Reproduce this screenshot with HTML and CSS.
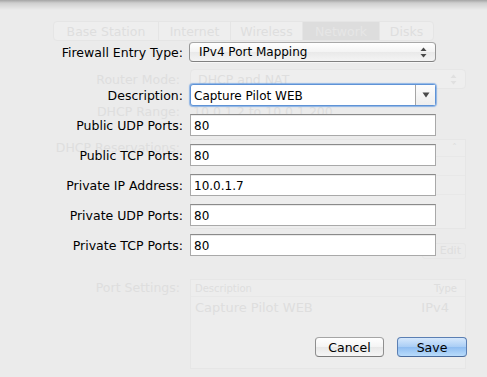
FILE: index.html
```
<!DOCTYPE html>
<html lang="en">
<head>
    <meta charset="UTF-8">
    <meta name="viewport" content="width=device-width, initial-scale=1.0">
    <title>Port Mapping</title>
    <link rel="stylesheet" href="styles.css">
</head>
<body>
    <!-- window behind the sheet, seen faded -->
    <div class="window">
        <div class="tabs">
            <span class="tab">Base Station</span>
            <span class="tab">Internet</span>
            <span class="tab">Wireless</span>
            <span class="tab selected">Network</span>
            <span class="tab">Disks</span>
        </div>
        <div class="ghost-form">
            <span class="ghost-label">Router Mode:</span>
            <div class="ghost-popup">
                <span>DHCP and NAT</span>
                <svg width="7" height="11" viewBox="0 0 7 11">
                    <path d="M3.5 0.5 L6.5 4 L0.5 4 Z" fill="#e0e0e0"/>
                    <path d="M3.5 10.5 L6.5 7 L0.5 7 Z" fill="#e0e0e0"/>
                </svg>
            </div>

            <span class="ghost-label range">DHCP Range:</span>
            <span class="ghost-text range">10.0.1.2 to 10.0.1.200</span>

            <span class="ghost-label top">DHCP Reservations:</span>
            <div class="ghost-table reservations">
                <div class="ghost-head"><span>Description</span><span>IP Address</span><span>&#710;</span></div>
                <div class="ghost-line"></div>
                <div class="ghost-line"></div>
            </div>

            <span></span>
            <div class="ghost-buttons"><span class="ghost-btn">Edit</span></div>

            <span class="ghost-label top ports-label">Port Settings:</span>
            <div class="ghost-table ports">
                <div class="ghost-head"><span>Description</span><span>Type</span></div>
                <div class="ghost-row"><span>Capture Pilot WEB</span><span>IPv4</span></div>
            </div>
        </div>
    </div>

    <div class="sheet">
        <form class="form">
            <label class="first">Firewall Entry Type:</label>
            <div class="popup first">
                <span>IPv4 Port Mapping</span>
                <svg width="7" height="11" viewBox="0 0 7 11">
                    <path d="M3.5 0.5 L6.5 4 L0.5 4 Z" fill="#4a4a4a"/>
                    <path d="M3.5 10.5 L6.5 7 L0.5 7 Z" fill="#4a4a4a"/>
                </svg>
            </div>

            <label for="desc">Description:</label>
            <div class="combo">
                <input id="desc" type="text" value="Capture Pilot WEB">
                <span class="combo-btn">
                    <svg width="8" height="6" viewBox="0 0 8 6"><path d="M0.5 0.5 L7.5 0.5 L4 5.5 Z" fill="#4a4a4a"/></svg>
                </span>
            </div>

            <label for="pubUdp">Public UDP Ports:</label>
            <input id="pubUdp" class="field" type="text" value="80">

            <label for="pubTcp">Public TCP Ports:</label>
            <input id="pubTcp" class="field" type="text" value="80">

            <label for="privIp">Private IP Address:</label>
            <input id="privIp" class="field" type="text" value="10.0.1.7">

            <label for="privUdp">Private UDP Ports:</label>
            <input id="privUdp" class="field" type="text" value="80">

            <label for="privTcp">Private TCP Ports:</label>
            <input id="privTcp" class="field" type="text" value="80">
        </form>

        <div class="actions">
            <button type="button" class="btn">Cancel</button>
            <button type="button" class="btn default">Save</button>
        </div>
    </div>
</body>
</html>
```

FILE: styles.css
```
html, body {
    margin: 0;
    height: 100%;
}
body {
    position: relative;
    width: 487px;
    height: 377px;
    overflow: hidden;
    background-color: #ebebeb;
    font-family: "Lucida Grande", "DejaVu Sans", sans-serif;
    font-size: 12.5px;
    color: #000;
}

/* faded window behind */
.window {
    padding-top: 21px;
    color: #dedede;
}
.tabs {
    display: flex;
    width: 381px;
    height: 20px;
    margin: 0 0 0 53px;
    border: 1px solid #e5e5e5;
    border-radius: 4px;
    box-sizing: border-box;
    background: #eeeeee;
}
.tab {
    display: flex;
    align-items: center;
    justify-content: center;
    border-right: 1px solid #e5e5e5;
}
.tab:nth-child(1) { width: 104px; }
.tab:nth-child(2) { width: 71px; }
.tab:nth-child(3) { width: 71px; }
.tab:nth-child(4) { width: 76px; }
.tab:nth-child(5) { flex: 1; border-right: none; }
.tab.selected {
    background: #dddddd;
    color: #e6e6e6;
}
.ghost-form {
    display: grid;
    grid-template-columns: 180px 276px;
    column-gap: 10px;
    margin-top: 28px;
}
.ghost-label {
    text-align: right;
    align-self: center;
}
.ghost-label.top {
    align-self: start;
    padding-top: 1px;
}
.ghost-popup {
    height: 20px;
    display: flex;
    align-items: center;
    justify-content: space-between;
    padding: 0 8px 0 7px;
    border: 1px solid #e6e6e6;
    border-radius: 4px;
    box-sizing: border-box;
    background: #eeeeee;
}
.range {
    margin: 15px 0 20px;
}
.ghost-text.range {
    padding-left: 3px;
}
.ghost-table {
    border: 1px solid #e6e6e6;
    box-sizing: border-box;
    background: #ededed;
}
.ghost-table.reservations {
    height: 90px;
}
.ghost-table.ports {
    height: 90px;
    margin-top: 20px;
}
.ports-label {
    margin-top: 20px;
}
.ghost-head {
    display: flex;
    justify-content: space-between;
    height: 16px;
    align-items: center;
    padding: 0 8px 0 4px;
    font-size: 10px;
    border-bottom: 1px solid #e8e8e8;
}
.reservations .ghost-head span:nth-child(2) {
    margin-left: 70px;
}
.ghost-line {
    height: 18px;
    border-bottom: 1px solid #e8e8e8;
}
.ghost-row {
    display: flex;
    justify-content: space-between;
    padding: 3px 16px 0 4px;
    font-size: 13px;
}
.ghost-buttons {
    display: flex;
    justify-content: flex-end;
    margin-top: 14px;
}
.ghost-btn {
    width: 44px;
    height: 16px;
    border: 1px solid #e6e6e6;
    border-radius: 3px;
    box-sizing: border-box;
    text-align: right;
    padding-right: 4px;
    font-size: 11px;
    line-height: 14px;
}

/* the sheet on top */
.sheet {
    position: absolute;
    inset: 0;
    display: flex;
    flex-direction: column;
    background: linear-gradient(rgba(0,0,0,0.3), rgba(0,0,0,0.12) 3px, rgba(0,0,0,0) 10px);
}
.form {
    display: grid;
    grid-template-columns: 183px 246px;
    column-gap: 7px;
    row-gap: 8px;
    margin: 42px 0 0;
}
.form label {
    text-align: right;
    align-self: center;
}
.form label.first {
    margin-bottom: 14px;
}
.popup {
    height: 20px;
    margin-left: -1px;
    display: flex;
    align-items: center;
    justify-content: space-between;
    padding: 0 8px 0 9px;
    font-size: 12px;
    border: 1px solid #959595;
    border-top-color: #a8a8a8;
    border-bottom-color: #808080;
    border-radius: 4px;
    box-sizing: border-box;
    background: linear-gradient(#ffffff, #f3f3f3 50%, #e9e9e9 51%, #f4f4f4);
    box-shadow: 0 1px 0 rgba(255,255,255,0.6);
}
.popup.first {
    margin-bottom: 14px;
}
.combo {
    display: flex;
    height: 22px;
    border: 1px solid #5f93d6;
    border-radius: 3px;
    box-sizing: border-box;
    background: #fff;
    box-shadow: 0 0 1px 1px rgba(110,160,225,0.75);
}
.combo input {
    flex: 1;
    min-width: 0;
    border: none;
    outline: none;
    padding: 2px 0 0 3px;
    font: inherit;
    font-size: 12px;
    background: transparent;
}
.combo-btn {
    width: 19px;
    display: flex;
    align-items: center;
    justify-content: center;
    border-left: 1px solid #a5a5a5;
    background: linear-gradient(#fcfcfc, #eeeeee);
}
.field {
    height: 22px;
    border: 1px solid #a9a9a9;
    border-top-color: #8a8a8a;
    box-sizing: border-box;
    padding: 2px 0 0 3px;
    font: inherit;
    font-size: 12px;
    background: #fff;
    box-shadow: inset 0 1px 0 #eaeaea;
    outline: none;
}
.actions {
    display: flex;
    justify-content: flex-end;
    gap: 13px;
    margin-top: auto;
    padding: 0 20px 20px 0;
}
.btn {
    height: 20px;
    width: 69px;
    padding: 0;
    font: inherit;
    font-size: 12.5px;
    border: 1px solid #8f8f8f;
    border-top-color: #a5a5a5;
    border-bottom-color: #7c7c7c;
    border-radius: 4px;
    background: linear-gradient(#ffffff, #f4f4f4 50%, #e8e8e8 51%, #f6f6f6);
    color: #000;
}
.btn.default {
    width: 70px;
    border-color: #5b7fb3;
    border-bottom-color: #4b6c9d;
    background: linear-gradient(#d6e8fc, #a9cdf5 50%, #8fbdf1 51%, #b9dcfb);
}
```
